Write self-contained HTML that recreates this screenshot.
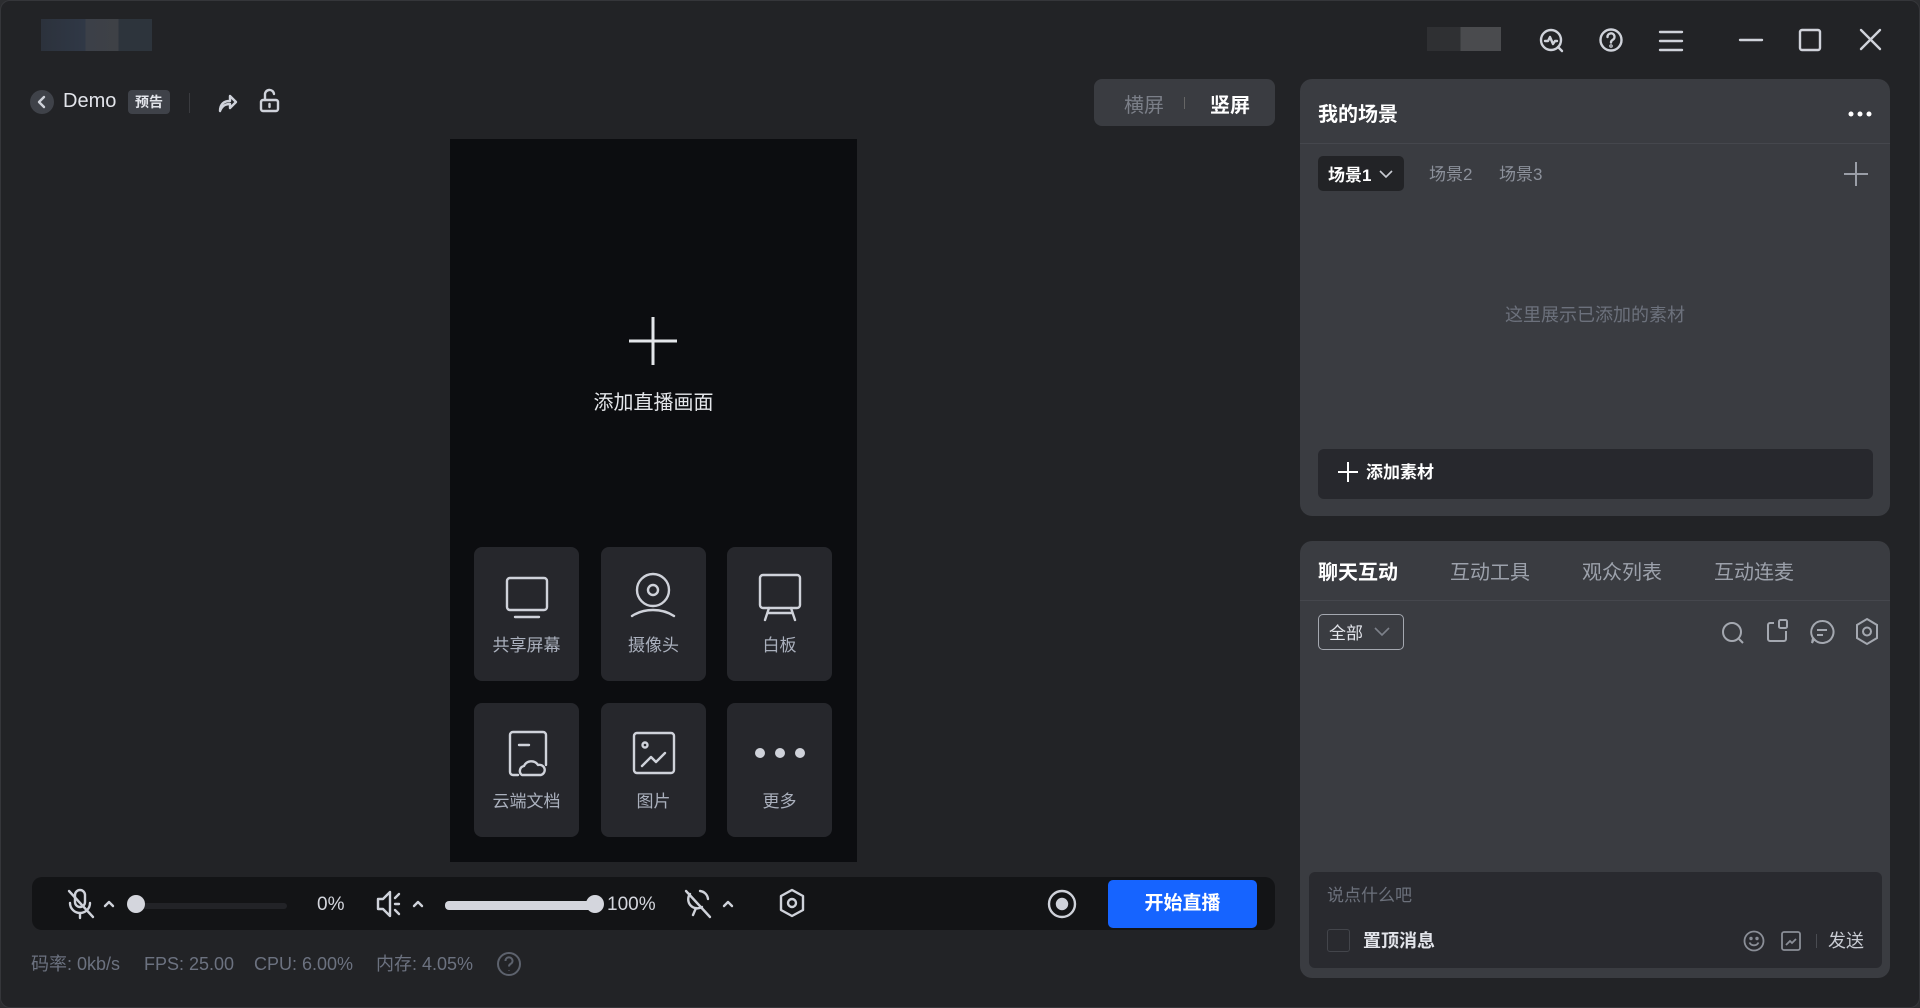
<!DOCTYPE html>
<html><head><meta charset="utf-8"><style>
*{margin:0;padding:0;box-sizing:border-box}
body{width:1920px;height:1008px;background:#2c2d30;font-family:"Liberation Sans","Noto Sans CJK SC",sans-serif;overflow:hidden;position:relative}
.win{position:absolute;left:0;top:0;width:1920px;height:1008px;background:#222326;border-radius:10px;border:1px solid #35363a}
.a{position:absolute}
svg{position:absolute;overflow:visible}
.ic{fill:none;stroke:#cfd2da;stroke-width:2.4;stroke-linecap:round;stroke-linejoin:round}
.panel{background:#3a3c41;border-radius:12px}
.tile{position:absolute;width:105px;height:134px;background:#26272c;border-radius:8px}
.tile span{position:absolute;left:0;right:0;top:84px;text-align:center;color:#aab0bd;font-size:17px}
.st{color:#6c7280;font-size:18px;line-height:22px}
</style></head><body><div class="win">
<div class="a" style="left:40px;top:18px;width:111px;height:32px;background:linear-gradient(90deg,#2c323c 0,#303846 40%,#3c4048 40%,#3e4146 70%,#2d343c 70%)"></div>
<div class="a" style="left:1426px;top:26px;width:74px;height:24px;background:linear-gradient(90deg,#2f3033 45%,#4a4b4e 45%)"></div>
<svg style="left:1538px;top:27px" width="26" height="26" class="ic"><circle cx="12" cy="12" r="10"/><path d="M19 19l4 4M6 13h3l2-4 3 7 2-3h2"/></svg>
<svg style="left:1598px;top:27px" width="26" height="26" class="ic"><circle cx="12" cy="12" r="10.5"/><path d="M8.5 9a3.5 3.5 0 1 1 5 3c-1 .6-1.5 1.2-1.5 2.5"/><circle cx="12" cy="18" r=".6"/></svg>
<svg style="left:1658px;top:29px" width="26" height="22" class="ic"><path d="M1 2h22M1 11h22M1 20h22"/></svg>
<svg style="left:1738px;top:28px" width="26" height="22" class="ic"><path d="M1 11h22"/></svg>
<svg style="left:1798px;top:28px" width="26" height="22" class="ic"><rect x="1" y="1" width="20" height="20" rx="2"/></svg>
<svg style="left:1858px;top:28px" width="26" height="22" class="ic"><path d="M2 1l19 19M21 1L2 20"/></svg>
<div class="a" style="left:29px;top:89px;width:24px;height:24px;border-radius:12px;background:#3f4249"></div>
<svg style="left:35px;top:94px" width="14" height="14" class="ic"><path d="M8 2L3 7l5 5"/></svg>
<div class="a" style="left:62px;top:89px;color:#e2e4ea;font-size:20px">Demo</div>
<div class="a" style="left:127px;top:89px;width:42px;height:24px;border-radius:4px;background:#3f4249;color:#e2e4ea;font-size:14px;line-height:24px;text-align:center;font-weight:bold">预告</div>
<div class="a" style="left:188px;top:92px;width:1px;height:20px;background:#3a3b3f"></div>
<svg style="left:215px;top:90px" width="22" height="22" class="ic"><path d="M4 20c0-7 4-10 10-10V5l6 6-6 6v-4c-5 0-8 2-10 7z"/></svg>
<svg style="left:258px;top:88px" width="22" height="24" class="ic"><rect x="2" y="11" width="17" height="11" rx="2"/><path d="M6 11V6a4.5 4.5 0 0 1 9-1M10.5 15v3"/></svg>
<div class="a" style="left:1093px;top:78px;width:181px;height:47px;border-radius:8px;background:#3a3c41"></div>
<div class="a" style="left:1123px;top:88px;color:#7b7f88;font-size:20px">横屏</div>
<div class="a" style="left:1183px;top:96px;width:1px;height:12px;background:#666"></div>
<div class="a" style="left:1209px;top:88px;color:#fff;font-size:20px;font-weight:bold">竖屏</div>
<div class="a" style="left:449px;top:138px;width:407px;height:723px;background:#0c0d10"></div>
<svg style="left:626px;top:314px" width="52" height="52"><path d="M26 2v48M2 26h48" stroke="#e4e6ea" stroke-width="3"/></svg>
<div class="a" style="left:449px;top:385px;width:407px;text-align:center;color:#e4e6ea;font-size:20px">添加直播画面</div>
<div class="tile" style="left:473px;top:546px"><span>共享屏幕</span>
<svg style="left:32px;top:30px" width="44" height="44" class="ic"><rect x="1" y="1" width="40" height="32" rx="3"/><path d="M9 40h24"/></svg></div>
<div class="tile" style="left:600px;top:546px"><span>摄像头</span>
<svg style="left:29px;top:25px" width="48" height="48" class="ic"><circle cx="23" cy="18" r="16"/><circle cx="23" cy="18" r="5"/><path d="M2 44c12-8 30-8 42 0"/></svg></div>
<div class="tile" style="left:726px;top:546px"><span>白板</span>
<svg style="left:32px;top:27px" width="44" height="46" class="ic"><rect x="1" y="1" width="40" height="33" rx="3"/><path d="M6 46l4-12M36 46l-4-12M9 39h24"/></svg></div>
<div class="tile" style="left:473px;top:702px"><span>云端文档</span>
<svg style="left:34px;top:28px" width="44" height="44" class="ic"><path d="M10 44H5a3 3 0 0 1-3-3V4a3 3 0 0 1 3-3h30a3 3 0 0 1 3 3v30"/><path d="M11 14h10"/><path d="M14 44a5 5 0 0 1 2-9 8 8 0 0 1 14-1 5 5 0 0 1 3 10z"/></svg></div>
<div class="tile" style="left:600px;top:702px"><span>图片</span>
<svg style="left:32px;top:29px" width="44" height="44" class="ic"><rect x="1" y="1" width="40" height="40" rx="3"/><circle cx="12" cy="13" r="2.5"/><path d="M9 34l9-9 5 5 9-9"/></svg></div>
<div class="tile" style="left:726px;top:702px"><span>更多</span>
<svg style="left:27px;top:44px" width="52" height="12"><circle cx="6" cy="6" r="5" fill="#cfd2da"/><circle cx="26" cy="6" r="5" fill="#cfd2da"/><circle cx="46" cy="6" r="5" fill="#cfd2da"/></svg></div>
<div class="a" style="left:31px;top:876px;width:1243px;height:53px;border-radius:10px;background:#131416"></div>
<svg style="left:66px;top:888px" width="28" height="30" class="ic"><rect x="8" y="1" width="10" height="17" rx="5"/><path d="M3 14a10 10 0 0 0 20 0M13 24v5M2 2l24 26"/></svg>
<svg style="left:102px;top:898px" width="12" height="10" class="ic"><path d="M2 7l4-4 4 4"/></svg>
<div class="a" style="left:128px;top:902px;width:158px;height:6px;border-radius:3px;background:#222327"></div>
<div class="a" style="left:126px;top:894px;width:18px;height:18px;border-radius:9px;background:#d4d6dd"></div>
<div class="a" style="left:316px;top:893px;color:#d4d6dd;font-size:19px">0%</div>
<svg style="left:375px;top:888px" width="30" height="30" class="ic"><path d="M2 10h5l7-7v24l-7-7H2z"/><path d="M19 9l4-4M19 15h4M19 21l4 4"/></svg>
<svg style="left:411px;top:898px" width="12" height="10" class="ic"><path d="M2 7l4-4 4 4"/></svg>
<div class="a" style="left:444px;top:900px;width:150px;height:9px;border-radius:4px;background:#d4d6dd"></div>
<div class="a" style="left:585px;top:894px;width:18px;height:18px;border-radius:9px;background:#d4d6dd"></div>
<div class="a" style="left:606px;top:893px;color:#d4d6dd;font-size:19px">100%</div>
<svg style="left:683px;top:888px" width="30" height="30" class="ic"><path d="M16 2a9 9 0 0 1 8 8M6 5a9 9 0 0 0 12 13M9 26l3-7M2 2l24 26"/></svg>
<svg style="left:721px;top:898px" width="12" height="10" class="ic"><path d="M2 7l4-4 4 4"/></svg>
<svg style="left:777px;top:887px" width="30" height="32" class="ic"><path d="M14 2l11 6v14l-11 6-11-6V8z"/><circle cx="14" cy="15" r="4"/></svg>
<svg style="left:1046px;top:888px" width="32" height="32" class="ic"><circle cx="15" cy="15" r="13"/><circle cx="15" cy="15" r="5" fill="#cfd2da"/></svg>
<div class="a" style="left:1107px;top:879px;width:149px;height:48px;border-radius:5px;background:#1664ff;color:#fff;font-size:19px;font-weight:bold;text-align:center;line-height:48px">开始直播</div>
<div class="a st" style="left:30px;top:952px">码率: 0kb/s</div>
<div class="a st" style="left:143px;top:952px">FPS: 25.00</div>
<div class="a st" style="left:253px;top:952px">CPU: 6.00%</div>
<div class="a st" style="left:375px;top:952px">内存: 4.05%</div>
<svg style="left:496px;top:951px" width="26" height="26" fill="none" stroke="#5d626d" stroke-width="2"><circle cx="12" cy="12" r="11"/><path d="M8.5 9a3.5 3.5 0 1 1 5 3c-1 .6-1.5 1.2-1.5 2.5M12 18v.5"/></svg>
<div class="a panel" style="left:1299px;top:78px;width:590px;height:437px"></div>
<div class="a" style="left:1317px;top:97px;color:#fff;font-size:20px;font-weight:bold">我的场景</div>
<svg style="left:1847px;top:110px" width="24" height="6"><circle cx="3" cy="3" r="2.5" fill="#fff"/><circle cx="12" cy="3" r="2.5" fill="#fff"/><circle cx="21" cy="3" r="2.5" fill="#fff"/></svg>
<div class="a" style="left:1299px;top:142px;width:590px;height:1px;background:#45474d"></div>
<div class="a" style="left:1317px;top:155px;width:86px;height:35px;border-radius:5px;background:#222326"></div>
<div class="a" style="left:1327px;top:160px;color:#fff;font-size:17px;font-weight:bold">场景1</div>
<svg style="left:1378px;top:168px" width="14" height="10" fill="none" stroke="#c9ccd3" stroke-width="1.6"><path d="M1 2l6 6 6-6"/></svg>
<div class="a" style="left:1428px;top:159px;color:#8c919b;font-size:17px">场景2</div>
<div class="a" style="left:1498px;top:159px;color:#8c919b;font-size:17px">场景3</div>
<svg style="left:1842px;top:160px" width="26" height="26" stroke="#9a9ea7" stroke-width="2"><path d="M13 1v24M1 13h24"/></svg>
<div class="a" style="left:1299px;top:300px;width:590px;text-align:center;color:#6c717c;font-size:18px">这里展示已添加的素材</div>
<div class="a" style="left:1317px;top:448px;width:555px;height:50px;border-radius:6px;background:#27282d"></div>
<svg style="left:1336px;top:460px" width="22" height="22" stroke="#fff" stroke-width="2"><path d="M11 1v20M1 11h20"/></svg>
<div class="a" style="left:1365px;top:457px;color:#fff;font-size:17px;font-weight:bold">添加素材</div>
<div class="a panel" style="left:1299px;top:540px;width:590px;height:437px"></div>
<div class="a" style="left:1317px;top:555px;color:#fff;font-size:20px;font-weight:bold">聊天互动</div>
<div class="a" style="left:1449px;top:555px;color:#9ca1ab;font-size:20px">互动工具</div>
<div class="a" style="left:1581px;top:555px;color:#9ca1ab;font-size:20px">观众列表</div>
<div class="a" style="left:1713px;top:555px;color:#9ca1ab;font-size:20px">互动连麦</div>
<div class="a" style="left:1299px;top:599px;width:590px;height:1px;background:#45474d"></div>
<div class="a" style="left:1317px;top:613px;width:86px;height:36px;border-radius:5px;border:1.5px solid #a4a8b0"></div>
<div class="a" style="left:1328px;top:618px;color:#e2e4ea;font-size:17px">全部</div>
<svg style="left:1373px;top:626px" width="16" height="10" fill="none" stroke="#7d818a" stroke-width="1.6"><path d="M1 1l7 7 7-7"/></svg>
<svg style="left:1720px;top:620px" width="26" height="26" fill="none" stroke="#a4a8b0" stroke-width="2"><circle cx="11" cy="11" r="9"/><path d="M18 18l4 4"/></svg>
<svg style="left:1765px;top:618px" width="26" height="26" fill="none" stroke="#a4a8b0" stroke-width="2"><path d="M8 4H4a2 2 0 0 0-2 2v14a2 2 0 0 0 2 2h14a2 2 0 0 0 2-2v-8"/><rect x="13" y="1" width="8" height="8" rx="1.5"/></svg>
<svg style="left:1809px;top:619px" width="26" height="26" fill="none" stroke="#a4a8b0" stroke-width="2"><path d="M12 1a11 11 0 1 1-8 18L2 23l1-5A11 11 0 0 1 12 1z"/><path d="M7 10h10M7 15h6"/></svg>
<svg style="left:1854px;top:617px" width="26" height="28" fill="none" stroke="#a4a8b0" stroke-width="2"><path d="M12 1l10 6v13l-10 6-10-6V7z"/><circle cx="12" cy="13.5" r="4"/></svg>
<div class="a" style="left:1308px;top:871px;width:573px;height:96px;border-radius:6px;background:#292a2f"></div>
<div class="a" style="left:1326px;top:880px;color:#6c717c;font-size:17px">说点什么吧</div>
<div class="a" style="left:1326px;top:928px;width:23px;height:23px;border-radius:3px;border:1.5px solid #43454b"></div>
<div class="a" style="left:1362px;top:926px;color:#e2e4ea;font-size:18px;font-weight:bold">置顶消息</div>
<svg style="left:1742px;top:929px" width="22" height="22" fill="none" stroke="#8a8e97" stroke-width="1.8"><circle cx="11" cy="11" r="9.5"/><path d="M6.5 12.5a5 5 0 0 0 9 0"/><circle cx="8" cy="8.5" r=".8"/><circle cx="14" cy="8.5" r=".8"/></svg>
<svg style="left:1780px;top:930px" width="20" height="20" fill="none" stroke="#8a8e97" stroke-width="1.8"><rect x="1" y="1" width="18" height="18" rx="2"/><path d="M5 14l4-4 2 2 4-4"/></svg>
<div class="a" style="left:1815px;top:933px;width:1px;height:14px;background:#4a4c52"></div>
<div class="a" style="left:1827px;top:926px;color:#c9ccd3;font-size:18px">发送</div>
</div></body></html>
